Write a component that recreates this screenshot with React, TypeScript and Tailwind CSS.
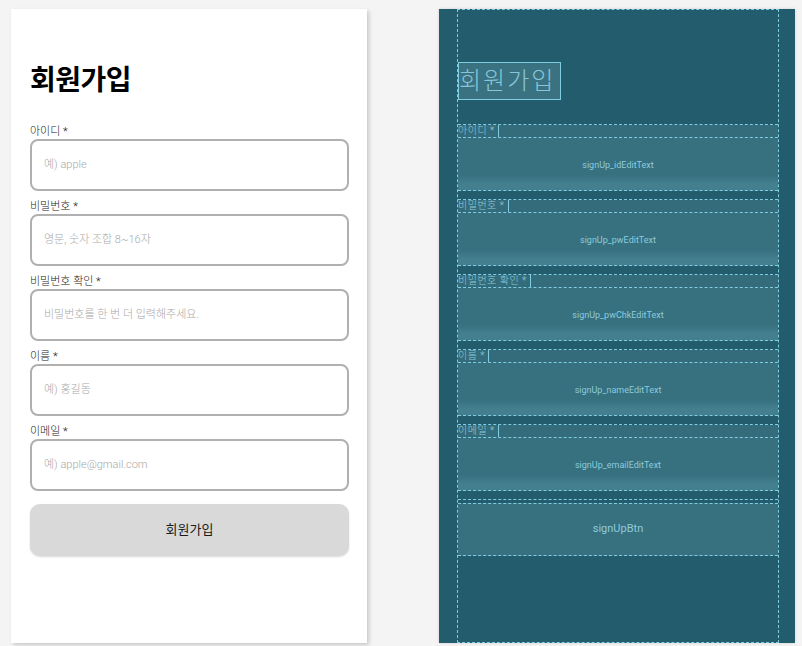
import React from 'react';

const fields = [
    { label: '아이디', hint: '예) apple', id: 'signUp_idEditText' },
    { label: '비밀번호', hint: '영문, 숫자 조합 8~16자', id: 'signUp_pwEditText' },
    { label: '비밀번호 확인', hint: '비밀번호를 한 번 더 입력해주세요.', id: 'signUp_pwChkEditText' },
    { label: '이름', hint: '예) 홍길동', id: 'signUp_nameEditText' },
    { label: '이메일', hint: '예) apple@gmail.com', id: 'signUp_emailEditText' },
];

const font = { fontFamily: 'Roboto, "Noto Sans CJK KR", sans-serif' };

const DesignView = () => (
    <div className="w-[356px] h-[634px] bg-white shadow-[2px_2px_4px_rgba(0,0,0,0.18)] pt-[53px] pl-[19px] pr-[18px] shrink-0">
        <h1 className="text-[28px] leading-[38px] font-bold text-black tracking-[-0.5px]">회원가입</h1>
        <div className="mt-[25px] flex flex-col">
            {fields.map((f) => (
                <div key={f.id} className="flex flex-col mb-[9px]">
                    <div className="h-[14px] text-[11px] leading-[14px] text-[#222] font-light">
                        {f.label} *
                    </div>
                    <div className="h-[52px] border-2 border-[#b0b0b0] rounded-[8px] flex items-center pl-[12px] text-[11px] text-[#a8a8a8] font-light">
                        {f.hint}
                    </div>
                </div>
            ))}
            <button className="mt-[4px] h-[52px] rounded-[10px] bg-[#d9d9d9] shadow-[0_1px_2px_rgba(0,0,0,0.15)] text-[13px] text-[#1a1a1a]">
                회원가입
            </button>
        </div>
    </div>
);

const BlueprintView = () => (
    <div className="w-[356px] h-[634px] bg-[#235c6d] pl-[18px] pr-[16px] shrink-0 shadow-[0_0_3px_rgba(0,0,0,0.15)]">
        <div className="h-full border border-dashed border-[#7fcde2] flex flex-col">
            <div className="h-[115px] border-b border-dashed border-[#7fcde2] pt-[52px]">
                <div className="w-[103px] h-[38px] bg-[#3a7282] border border-[#7fcde2] text-[24px] leading-[36px] text-[#86c6d8] tracking-[2px] font-light">
                    회원가입
                </div>
            </div>
            {fields.map((f) => (
                <div key={f.id} className="flex flex-col">
                    <div className="h-[13px] bg-[#356c7b] border-b border-dashed border-[#7fcde2] flex">
                        <div className="h-full border-r border-[#7fcde2] pr-[3px] text-[10px] leading-[12px] text-[#8ccbdc] tracking-[0.5px] font-light">
                            {f.label} *
                        </div>
                    </div>
                    <div className="h-[53px] pt-[4px] border-b border-dashed border-[#7fcde2] bg-gradient-to-b from-[#37707f] from-70% to-[#437f8f] to-88% flex items-center justify-center text-[9px] text-[#8ccbdc]">
                        {f.id}
                    </div>
                    <div className="h-[9px] border-b border-dashed border-[#7fcde2]" />
                </div>
            ))}
            <div className="mt-[3px] h-[53px] bg-[#37707f] border-y border-dashed border-[#7fcde2] flex items-center justify-center text-[11px] text-[#8ccbdc]">
                signUpBtn
            </div>
            <div className="flex-1" />
        </div>
    </div>
);

const App = () => {
    return (
        <div className="w-[802px] h-[646px] bg-[#f4f4f4] flex pt-[9px] pl-[11px] gap-[72px] overflow-hidden" style={font}>
            <DesignView />
            <BlueprintView />
        </div>
    );
};

export default App;
